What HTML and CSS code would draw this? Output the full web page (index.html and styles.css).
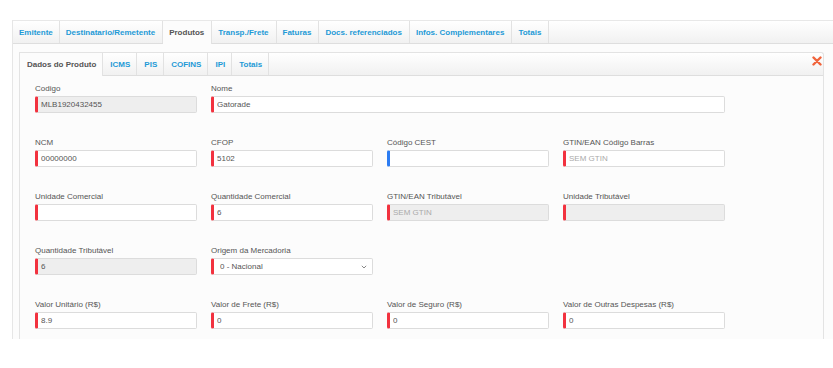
FILE: index.html
```html
<!DOCTYPE html>
<html lang="pt-BR">
<head>
    <meta charset="UTF-8">
    <title>Produtos</title>
    <link rel="stylesheet" href="styles.css">
</head>
<body>

    <div class="nota">
        <!-- abas principais -->
        <ul class="tabs tabs-main">
            <li><a>Emitente</a></li>
            <li><a>Destinatario/Remetente</a></li>
            <li class="active"><a>Produtos</a></li>
            <li><a>Transp./Frete</a></li>
            <li><a>Faturas</a></li>
            <li><a>Docs. referenciados</a></li>
            <li><a>Infos. Complementares</a></li>
            <li><a>Totais</a></li>
        </ul>

        <div class="nota-body">
            <div class="produto">
                <div class="produto-head">
                    <ul class="tabs tabs-sub">
                        <li class="active"><a>Dados do Produto</a></li>
                        <li><a>ICMS</a></li>
                        <li><a>PIS</a></li>
                        <li><a>COFINS</a></li>
                        <li><a>IPI</a></li>
                        <li><a>Totais</a></li>
                    </ul>
                    <span class="close">
                        <svg width="10" height="10" viewBox="0 0 10 10"><path d="M1.5 1.5L8.5 8.5M8.5 1.5L1.5 8.5" stroke="#f0643c" stroke-width="2.4" stroke-linecap="round"/></svg>
                    </span>
                </div>

                <div class="fields">
                    <div class="field">
                        <label>Codigo</label>
                        <input type="text" class="req" value="MLB1920432455" readonly>
                    </div>
                    <div class="field span3">
                        <label>Nome</label>
                        <input type="text" class="req" value="Gatorade">
                    </div>

                    <div class="field">
                        <label>NCM</label>
                        <input type="text" class="req" value="00000000">
                    </div>
                    <div class="field">
                        <label>CFOP</label>
                        <input type="text" class="req" value="5102">
                    </div>
                    <div class="field">
                        <label>Código CEST</label>
                        <input type="text" class="opt" value="">
                    </div>
                    <div class="field">
                        <label>GTIN/EAN Código Barras</label>
                        <input type="text" class="req" placeholder="SEM GTIN">
                    </div>

                    <div class="field">
                        <label>Unidade Comercial</label>
                        <input type="text" class="req" value="">
                    </div>
                    <div class="field">
                        <label>Quantidade Comercial</label>
                        <input type="text" class="req" value="6">
                    </div>
                    <div class="field">
                        <label>GTIN/EAN Tributável</label>
                        <input type="text" class="req" placeholder="SEM GTIN" readonly>
                    </div>
                    <div class="field">
                        <label>Unidade Tributável</label>
                        <input type="text" class="req" value="" readonly>
                    </div>

                    <div class="field">
                        <label>Quantidade Tributável</label>
                        <input type="text" class="req" value="6" readonly>
                    </div>
                    <div class="field">
                        <label>Origem da Mercadoria</label>
                        <div class="select-wrap">
                            <select class="req">
                                <option>0 - Nacional</option>
                            </select>
                            <svg class="chevron" width="6" height="4" viewBox="0 0 6 4"><path d="M0.8 0.8L3 3L5.2 0.8" fill="none" stroke="#888" stroke-width="1"/></svg>
                        </div>
                    </div>
                    <div class="field empty"></div>
                    <div class="field empty"></div>

                    <div class="field">
                        <label>Valor Unitário (R$)</label>
                        <input type="text" class="req" value="8.9">
                    </div>
                    <div class="field">
                        <label>Valor de Frete (R$)</label>
                        <input type="text" class="req" value="0">
                    </div>
                    <div class="field">
                        <label>Valor de Seguro (R$)</label>
                        <input type="text" class="req" value="0">
                    </div>
                    <div class="field">
                        <label>Valor de Outras Despesas (R$)</label>
                        <input type="text" class="req" value="0">
                    </div>
                </div>
            </div>
        </div>
    </div>

</body>
</html>
```

FILE: styles.css
```css
body {
    margin: 0;
    background-color: #fff;
    font-family: "Liberation Sans", Arial, sans-serif;
    font-size: 8px;
    color: #555;
}
.nota {
    margin: 20px 0 0 12px;
    height: 319px;
    border-left: 1px solid #e6e6e6;
    background-color: #fcfcfc;
}
.tabs {
    list-style: none;
    margin: 0;
    padding: 0;
    display: flex;
    height: 22px;
    background: linear-gradient(#ffffff, #f1f1f1);
    border-top: 1px solid #e8e8e8;
    border-bottom: 1px solid #dedede;
}
.tabs li {
    display: flex;
    align-items: center;
    padding: 0 7px 0 6px;
    border-right: 1px solid #e2e2e2;
    font-weight: bold;
    color: #1f9ad6;
    white-space: nowrap;
}
.tabs li.active {
    background-color: #fcfcfc;
    color: #555;
    margin-bottom: -1px;
}
.tabs-main li:first-child {
    padding-left: 6px;
    padding-right: 6px;
}
.nota-body {
    padding: 8px 9px 0 6px;
}
.produto {
    height: 287px;
    border: 1px solid #e3e3e3;
    border-bottom: none;
    border-radius: 0 3px 0 0;
    background-color: #fcfcfc;
}
.produto-head {
    position: relative;
}
.tabs-sub {
    border-top: none;
    border-radius: 0 3px 0 0;
}
.tabs-sub li {
    padding: 0 6px 0 7px;
}
.tabs-sub li.active {
    padding: 0 6px 0 7px;
}
.close {
    position: absolute;
    right: 1px;
    top: 3px;
    display: flex;
}
.fields {
    display: grid;
    grid-template-columns: repeat(4, 162px);
    column-gap: 14px;
    row-gap: 24px;
    padding: 7px 0 0 15px;
}
.span3 {
    grid-column: span 3;
}
.field label {
    display: block;
    line-height: 11px;
    margin-bottom: 2px;
    color: #555;
}
.field input, .field select {
    display: block;
    box-sizing: border-box;
    width: 100%;
    height: 17px;
    margin: 0;
    padding: 0 0 0 3px;
    font-family: inherit;
    font-size: 8px;
    color: #555;
    background-color: #fff;
    border: 1px solid #dcdcdc;
    border-radius: 2px;
    outline: none;
}
.field input.req, .field select.req {
    border-left: 3px solid #f2323f;
}
.field input.opt {
    border-left: 3px solid #2c7cf2;
}
.field input[readonly] {
    background-color: #eeeeee;
}
.field input::placeholder {
    color: #aaa;
}
.select-wrap {
    position: relative;
}
.field select {
    appearance: none;
    padding-left: 6px;
}
.chevron {
    position: absolute;
    right: 6px;
    top: 7px;
}
```
